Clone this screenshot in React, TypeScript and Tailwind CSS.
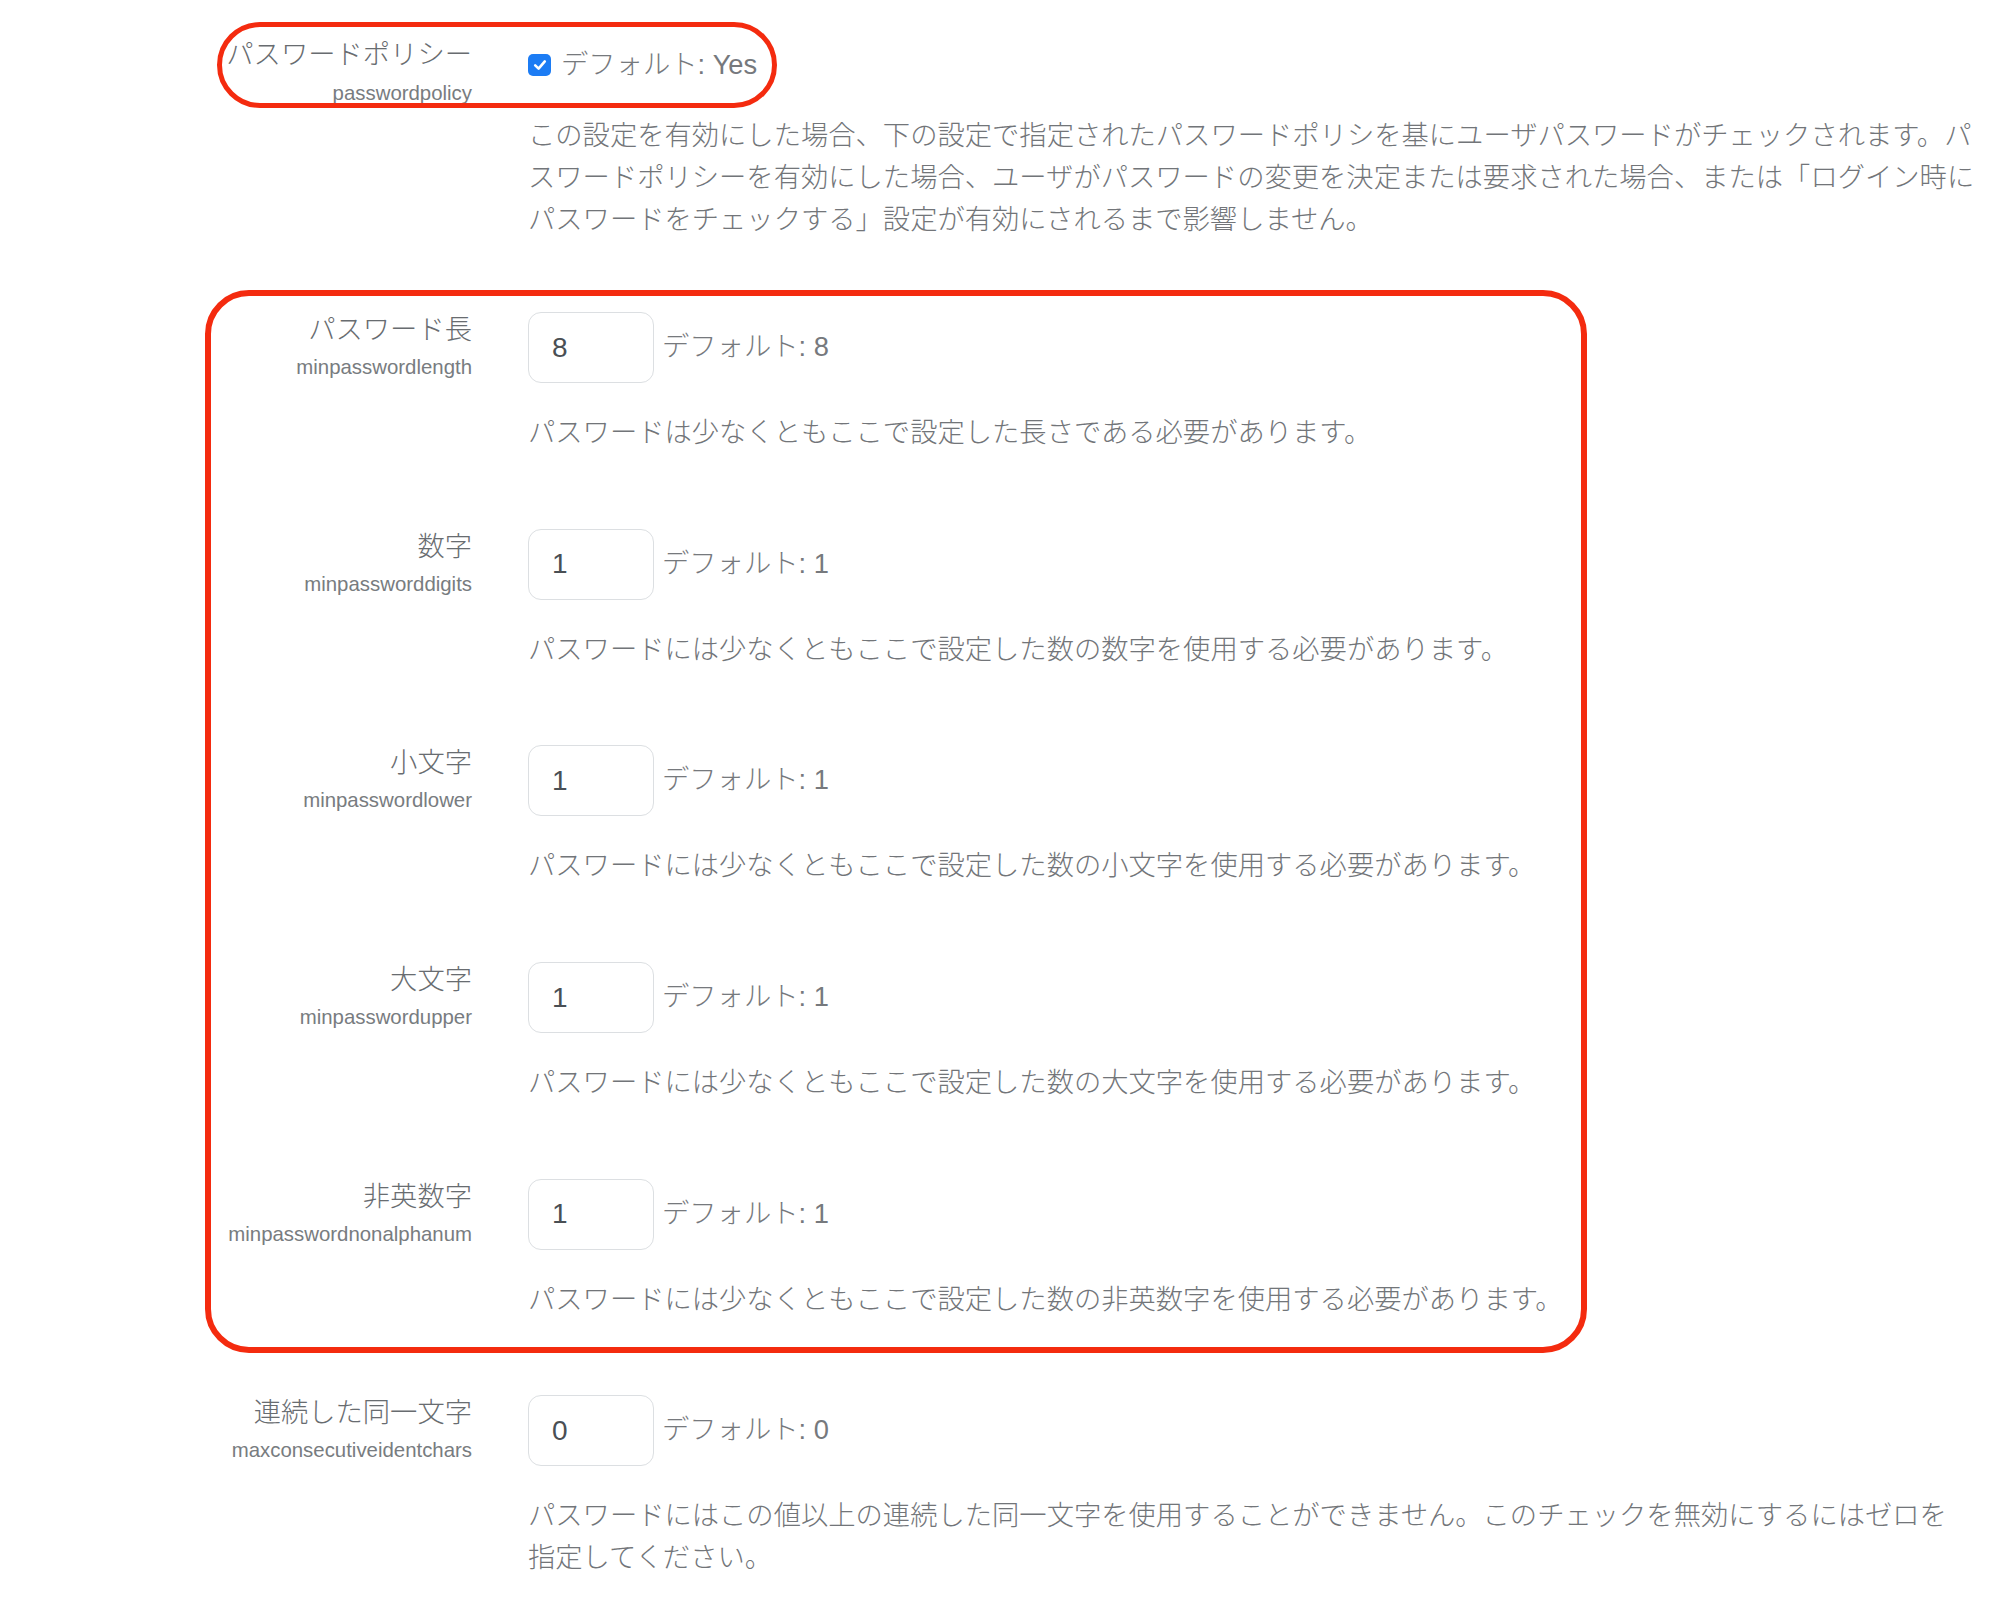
import React from 'react'

type Setting = {
  label: string
  name: string
  value: string
  def: string
  desc: React.ReactNode
}

const settings: Setting[] = [
  {
    label: 'パスワード長',
    name: 'minpasswordlength',
    value: '8',
    def: '8',
    desc: 'パスワードは少なくともここで設定した長さである必要があります。',
  },
  {
    label: '数字',
    name: 'minpassworddigits',
    value: '1',
    def: '1',
    desc: 'パスワードには少なくともここで設定した数の数字を使用する必要があります。',
  },
  {
    label: '小文字',
    name: 'minpasswordlower',
    value: '1',
    def: '1',
    desc: 'パスワードには少なくともここで設定した数の小文字を使用する必要があります。',
  },
  {
    label: '大文字',
    name: 'minpasswordupper',
    value: '1',
    def: '1',
    desc: 'パスワードには少なくともここで設定した数の大文字を使用する必要があります。',
  },
  {
    label: '非英数字',
    name: 'minpasswordnonalphanum',
    value: '1',
    def: '1',
    desc: 'パスワードには少なくともここで設定した数の非英数字を使用する必要があります。',
  },
  {
    label: '連続した同一文字',
    name: 'maxconsecutiveidentchars',
    value: '0',
    def: '0',
    desc: (
      <>
        パスワードにはこの値以上の連続した同一文字を使用することができません。このチェックを無効にするにはゼロを
        <br />
        指定してください。
      </>
    ),
  },
]

function Label({ label, name, subClass }: { label: string; name: string; subClass: string }) {
  return (
    <div className="w-[472px] shrink-0 text-right">
      <div className="text-[27.3px] font-light leading-[36px] text-[#686c70]">{label}</div>
      <div className={`text-[20.4px] leading-[38px] text-[#787c80] ${subClass}`}>{name}</div>
    </div>
  )
}

function NumberRow({ s }: { s: Setting }) {
  return (
    <div className="flex mt-[74.7px] first:mt-0">
      <Label label={s.label} name={s.name} subClass="" />
      <div className="ml-[56px] w-[1455px]">
        <div className="flex items-center">
          <input
            type="text"
            readOnly
            defaultValue={s.value}
            className="h-[71px] w-[126px] rounded-[13px] border-[1.5px] border-[#dcdfe2] bg-white pl-[23px] text-[28px] text-[#4a4f54] outline-none"
          />
          <span className="ml-[8px] text-[27.3px] font-light text-[#76797d]">デフォルト: {s.def}</span>
        </div>
        <p className="mt-[29px] text-[27.3px] font-light leading-[42px] text-[#727579]">{s.desc}</p>
      </div>
    </div>
  )
}

export default function App() {
  return (
    <div className="relative min-h-screen bg-white pt-[37px] font-['Liberation_Sans','Noto_Sans_CJK_JP',sans-serif]">
      {/* password policy */}
      <div className="flex">
        <Label label="パスワードポリシー" name="passwordpolicy" subClass="mt-[1px]" />
        <div className="ml-[56px] w-[1455px] pt-[10px]">
          <div className="flex h-[36px] items-center">
            <span className="flex h-[22px] w-[23px] items-center justify-center rounded-[5px] bg-[#1c7cf4]">
              <svg viewBox="0 0 16 16" className="h-[16px] w-[16px]">
                <path d="M3.2 8.4 L6.6 11.6 L12.8 4.4" fill="none" stroke="white" strokeWidth="2.6" strokeLinecap="round" strokeLinejoin="round" />
              </svg>
            </span>
            <span className="ml-[10px] text-[27.3px] font-light text-[#76797d]">デフォルト: Yes</span>
          </div>
          <p className="mt-[32px] text-[27.3px] font-light leading-[42px] text-[#727579]">
            この設定を有効にした場合、下の設定で指定されたパスワードポリシを基にユーザパスワードがチェックされます。パスワードポリシーを有効にした場合、ユーザがパスワードの変更を決定または要求された場合、または「ログイン時にパスワードをチェックする」設定が有効にされるまで影響しません。
          </p>
        </div>
      </div>

      <div className="mt-[71px] flex flex-col">
        {settings.map((s) => (
          <NumberRow key={s.name} s={s} />
        ))}
      </div>

      {/* annotations */}
      <div className="pointer-events-none absolute left-[217px] top-[22px] h-[86px] w-[560px] rounded-full border-[5px] border-[#f42b0f]" />
      <div className="pointer-events-none absolute left-[205px] top-[290px] h-[1063px] w-[1382px] rounded-[44px] border-[6px] border-[#f42b0f]" />
    </div>
  )
}
